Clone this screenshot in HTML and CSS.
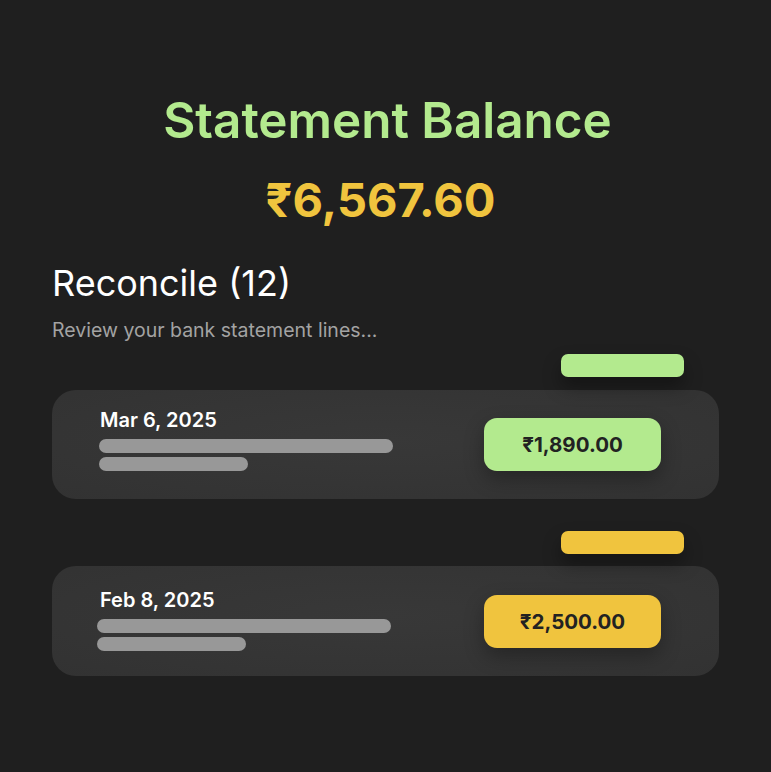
FILE: index.html
```html
<!DOCTYPE html>
<html lang="en">
<head>
<meta charset="utf-8">
<title>Statement Balance</title>
<link rel="stylesheet" href="styles.css">
</head>
<body>
<main class="page">
  <header class="summary">
    <h1 class="summary-title">Statement Balance</h1>
    <p class="summary-amount">₹6,567.60</p>
  </header>
  <section class="reconcile">
    <h2 class="reconcile-title">Reconcile (12)</h2>
    <p class="reconcile-sub">Review your bank statement lines...</p>
    <div class="entries">
      <article class="entry">
        <div class="entry-tag-row"><span class="entry-tag tag-green"></span></div>
        <div class="entry-card">
          <div class="entry-info">
            <div class="entry-date">Mar 6, 2025</div>
            <div class="entry-bar bar-long"></div>
            <div class="entry-bar bar-short"></div>
          </div>
          <div class="entry-amount amount-green">₹1,890.00</div>
        </div>
      </article>
      <article class="entry">
        <div class="entry-tag-row"><span class="entry-tag tag-yellow"></span></div>
        <div class="entry-card entry-card--tall">
          <div class="entry-info entry-info--low">
            <div class="entry-date">Feb 8, 2025</div>
            <div class="entry-bar bar-long"></div>
            <div class="entry-bar bar-short"></div>
          </div>
          <div class="entry-amount amount-yellow">₹2,500.00</div>
        </div>
      </article>
    </div>
  </section>
</main>
</body>
</html>
```
FILE: styles.css
```css
* { box-sizing: border-box; }
html, body { margin: 0; padding: 0; }
body {
  background: #1f1f1f;
  font-family: Inter, "Noto Sans", sans-serif;
  color: #ffffff;
  width: 771px;
  height: 772px;
  overflow: hidden;
}
.page {
  padding: 91px 52px 0 52px;
}
.summary {
  text-align: center;
}
.summary-title {
  margin: 0;
  padding-left: 4px;
  font-size: 49.4px;
  line-height: 58px;
  font-weight: 600;
  color: #b3ea8e;
}
.summary-amount {
  margin: 23px 0 0 0;
  padding-right: 10px;
  font-size: 47px;
  line-height: 56px;
  font-weight: 700;
  color: #f0c43e;
}
.reconcile {
  margin-top: 33px;
}
.reconcile-title {
  margin: 0;
  font-size: 36px;
  line-height: 44px;
  font-weight: 400;
  color: #ffffff;
}
.reconcile-sub {
  margin: 13px 0 0 0;
  font-size: 19.5px;
  line-height: 24px;
  color: #a3a3a3;
}
.entries {
  display: flex;
  flex-direction: column;
  gap: 32px;
  margin-top: 12px;
}
.entry-tag-row {
  display: flex;
  justify-content: flex-end;
  padding-right: 35px;
}
.entry-tag {
  display: block;
  width: 123px;
  height: 23px;
  border-radius: 7px;
  box-shadow: 0 10px 18px rgba(0, 0, 0, 0.35);
}
.tag-green { background: #b3ea8e; }
.tag-yellow { background: #f0c43e; }
.entry-card {
  margin-top: 13px;
  height: 109px;
  border-radius: 24px;
  background: radial-gradient(ellipse at 50% 45%, #383838 0%, #343434 70%, #323232 100%);
  display: flex;
  align-items: center;
  justify-content: space-between;
  padding: 0 58px 0 47px;
}
.entry-card--tall {
  height: 110px;
  margin-top: 12px;
}
.entry-info {
  display: flex;
  flex-direction: column;
  align-self: flex-start;
  padding-top: 18px;
}
.entry-info--low {
  padding-top: 22px;
  margin-left: -2px;
}
.entry-info--low .entry-date {
  padding-left: 3px;
}
.entry-date {
  font-size: 20px;
  line-height: 24px;
  font-weight: 600;
  color: #ffffff;
  padding-left: 1px;
}
.entry-bar {
  height: 13.5px;
  border-radius: 7px;
  background: #989898;
}
.bar-long {
  width: 294px;
  margin-top: 7px;
}
.bar-short {
  width: 149px;
  margin-top: 4.5px;
}
.entry-amount {
  width: 177px;
  height: 53px;
  border-radius: 13px;
  display: flex;
  align-items: center;
  justify-content: center;
  font-size: 20.5px;
  font-weight: 700;
  color: #222222;
  box-shadow: 0 8px 20px rgba(0, 0, 0, 0.3);
}
.amount-green { background: #b3ea8e; }
.amount-yellow { background: #f0c43e; }
```
